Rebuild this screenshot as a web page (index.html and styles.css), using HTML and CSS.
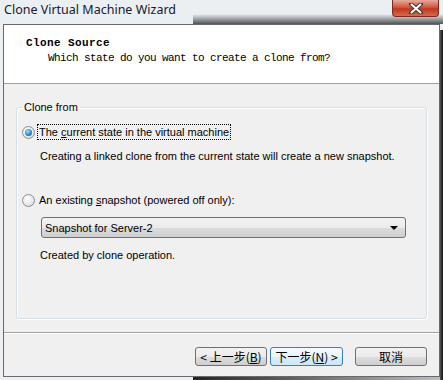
FILE: index.html
```html
<!DOCTYPE html>
<html lang="en">
<head>
    <meta charset="UTF-8">
    <title>Clone Virtual Machine Wizard</title>
    <link rel="stylesheet" href="styles.css">
</head>
<body>
    <div class="frame">
        <div class="titlebar">
            <span class="title">Clone Virtual Machine Wizard</span>
            <div class="close-btn">
                <svg width="16" height="11" viewBox="0 0 16 11">
                    <path d="M3 1 L13 10 M13 1 L3 10" stroke="#3a3a3a" stroke-width="4" stroke-linecap="round"/>
                    <path d="M3.5 1.5 L12.5 9.5 M12.5 1.5 L3.5 9.5" stroke="#fff" stroke-width="2" stroke-linecap="round"/>
                </svg>
            </div>
        </div>
        <div class="client">
            <div class="wiz-header">
                <div class="wiz-title">Clone Source</div>
                <div class="wiz-sub">Which state do you want to create a clone from?</div>
            </div>
            <div class="wiz-body">
                <fieldset class="group">
                    <legend>Clone from</legend>
                    <div class="group-inner">
                        <div class="radio-row">
                            <span class="radio checked"></span>
                            <span class="radio-label focus">The <u>c</u>urrent state in the virtual machine</span>
                        </div>
                        <div class="desc">Creating a linked clone from the current state will create a new snapshot.</div>
                        <div class="radio-row row2">
                            <span class="radio"></span>
                            <span class="radio-label">An existing <u>s</u>napshot (powered off only):</span>
                        </div>
                        <div class="combo">
                            <span>Snapshot for Server-2</span>
                            <span class="combo-arrow"></span>
                        </div>
                        <div class="desc desc2">Created by clone operation.</div>
                    </div>
                </fieldset>
            </div>
            <div class="wiz-footer">
                <button class="btn">&lt; 上一步(<u>B</u>)</button>
                <button class="btn default">下一步(<u>N</u>) &gt;</button>
                <button class="btn cancel">取消</button>
            </div>
        </div>
    </div>
</body>
</html>
```

FILE: styles.css
```css
body {
    margin: 0;
    font-family: "Liberation Sans", Arial, sans-serif;
    font-size: 11px;
}
.frame {
    width: 443px;
    height: 380px;
    background-color: #eceff2;
    background-image:
        linear-gradient(to bottom, rgba(0,0,0,0) 0, rgba(30,30,30,0.75) 100%),
        linear-gradient(to right, #555 0, #111 100%),
        linear-gradient(to right, rgba(0,0,0,0.85) 0, rgba(0,0,0,0.2) 100%);
    background-size: 250px 10px, 3px 350px, 250px 4px;
    background-position: 193px 14px, 440px 30px, 193px 376px;
    background-repeat: no-repeat;
    overflow: hidden;
}
.titlebar {
    height: 24px;
    display: flex;
    justify-content: space-between;
    align-items: flex-start;
}
.title {
    font-family: "Noto Sans", sans-serif;
    font-size: 12.5px;
    color: #14202e;
    padding-left: 4px;
    line-height: 20px;
}
.close-btn {
    width: 45px;
    height: 16px;
    margin-right: 4px;
    border: 1px solid #7a2a20;
    border-top: none;
    border-radius: 0 0 4px 4px;
    background: linear-gradient(to bottom, #e9a99a 0, #d1573f 45%, #c0381e 55%, #d66a4c 100%);
    display: flex;
    justify-content: center;
    align-items: center;
}
.client {
    margin-left: 3px;
    width: 435px;
    height: 351px;
    border: 1px solid #6a6a6a;
    background-color: #f0f0f0;
}
.wiz-header {
    height: 59px;
    background-color: #fff;
    border-bottom: 1px solid #a0a0a0;
    padding: 12px 0 0 22px;
    box-sizing: border-box;
    font-family: "Liberation Mono", monospace;
    font-size: 11px;
    line-height: 12px;
    color: #000;
}
.wiz-title {
    font-weight: bold;
    letter-spacing: 0.4px;
}
.wiz-sub {
    margin-top: 3px;
    padding-left: 22px;
    letter-spacing: -0.6px;
}
.wiz-body {
    height: 248px;
    padding: 16px 12px 0 12px;
    box-sizing: border-box;
}
.group {
    margin: 0;
    padding: 0;
    border: 1px solid #d5dfe5;
    border-radius: 3px;
    box-shadow: inset 1px 1px 0 #fff, 1px 1px 0 #fff;
}
.group legend {
    margin-left: 5px;
    padding: 0 2px;
    line-height: 14px;
    color: #000;
}
.group-inner {
    padding: 10px 0 55px 5px;
    white-space: nowrap;
}
.radio-row {
    display: flex;
    align-items: center;
    height: 16px;
}
.row2 {
    margin-top: 28px;
}
.radio {
    width: 11px;
    height: 11px;
    border: 1px solid #8e8f8f;
    border-radius: 50%;
    background: radial-gradient(circle at 40% 35%, #fff 0, #e6e6e6 60%, #c9c9c9 100%);
    position: relative;
    margin-right: 3px;
}
.radio.checked::after {
    content: "";
    position: absolute;
    left: 2px;
    top: 2px;
    width: 7px;
    height: 7px;
    border-radius: 50%;
    background: radial-gradient(circle at 40% 35%, #9fe0ff 0, #2b89d2 55%, #0b4e8f 100%);
}
.radio-label {
    padding: 0 1px;
    line-height: 14px;
}
.radio-label.focus {
    outline: 1px dotted #000;
}
.desc {
    margin-top: 8px;
    padding-left: 18px;
    line-height: 16px;
}
.combo {
    margin: 9px 0 0 19px;
    width: 353px;
    height: 19px;
    border: 1px solid #707070;
    border-radius: 3px;
    background: linear-gradient(to bottom, #f2f2f2 0, #ebebeb 50%, #dddddd 51%, #cfcfcf 100%);
    display: flex;
    justify-content: space-between;
    align-items: center;
    padding: 0 7px 0 3px;
}
.combo-arrow {
    width: 0;
    height: 0;
    border-left: 4px solid transparent;
    border-right: 4px solid transparent;
    border-top: 4px solid #000;
}
.desc2 {
    margin-top: 9px;
}
.wiz-footer {
    border-top: 1px solid #a0a0a0;
    box-shadow: inset 0 1px 0 #fff;
    display: flex;
    justify-content: flex-end;
    align-items: flex-start;
    padding: 14px 12px 0 0;
}
.btn {
    height: 19px;
    width: 72px;
    padding: 0;
    border: 1px solid #707070;
    border-radius: 3px;
    background: linear-gradient(to bottom, #f2f2f2 0, #ebebeb 50%, #dddddd 51%, #cfcfcf 100%);
    font-family: "Noto Sans CJK SC", sans-serif;
    font-size: 12px;
    line-height: 17px;
    color: #000;
}
.btn.default {
    width: 73px;
    margin-left: 3px;
    border-color: #3c7fb1;
    background: linear-gradient(to bottom, #f4fafd 0, #e8f4fb 50%, #d9edf9 51%, #cde7f7 100%);
}
.btn.cancel {
    margin-left: 12px;
}
```
